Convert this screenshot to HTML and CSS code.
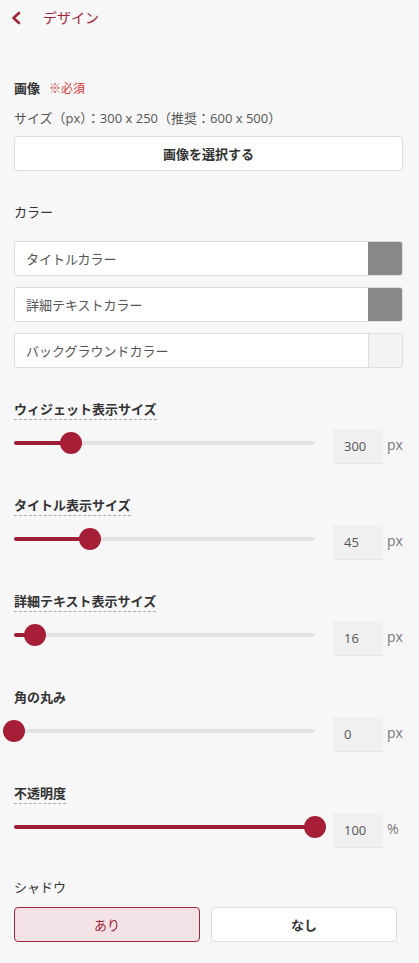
FILE: index.html
```html
<!DOCTYPE html>
<html lang="ja">
<head>
<meta charset="utf-8">
<title>デザイン</title>
<link rel="stylesheet" href="styles.css">
</head>
<body>
<div class="page">
  <header class="header">
    <svg class="back" width="24" height="24" viewBox="0 0 24 24"><polyline points="16,7 10.5,12 16,17" fill="none" stroke="#a0243c" stroke-width="2.6" stroke-linecap="round" stroke-linejoin="round"/></svg>
    <span class="title">デザイン</span>
  </header>

  <section class="image-sec">
    <div class="label bold">画像<span class="req">※必須</span></div>
    <div class="size-note">サイズ（px）：300 x 250（推奨：600 x 500）</div>
    <button class="select-btn">画像を選択する</button>
  </section>

  <section class="color-sec">
    <div class="label">カラー</div>
    <div class="color-row"><span class="color-name">タイトルカラー</span><span class="swatch gray"></span></div>
    <div class="color-row"><span class="color-name">詳細テキストカラー</span><span class="swatch gray"></span></div>
    <div class="color-row"><span class="color-name">バックグラウンドカラー</span><span class="swatch light"></span></div>
  </section>

  <section class="slider-sec">
    <div class="slabel dashed">ウィジェット表示サイズ</div>
    <div class="slider-row">
      <div class="slider"><div class="track"></div><div class="fill" style="width:57px"></div><div class="thumb" style="left:57px"></div></div>
      <div class="valbox">300</div><span class="unit">px</span>
    </div>
  </section>

  <section class="slider-sec">
    <div class="slabel dashed">タイトル表示サイズ</div>
    <div class="slider-row">
      <div class="slider"><div class="track"></div><div class="fill" style="width:76px"></div><div class="thumb" style="left:76px"></div></div>
      <div class="valbox">45</div><span class="unit">px</span>
    </div>
  </section>

  <section class="slider-sec">
    <div class="slabel dashed">詳細テキスト表示サイズ</div>
    <div class="slider-row">
      <div class="slider"><div class="track"></div><div class="fill" style="width:21px"></div><div class="thumb" style="left:21px"></div></div>
      <div class="valbox">16</div><span class="unit">px</span>
    </div>
  </section>

  <section class="slider-sec">
    <div class="slabel">角の丸み</div>
    <div class="slider-row">
      <div class="slider"><div class="track"></div><div class="fill" style="width:0px"></div><div class="thumb" style="left:0px"></div></div>
      <div class="valbox">0</div><span class="unit">px</span>
    </div>
  </section>

  <section class="slider-sec">
    <div class="slabel dashed">不透明度</div>
    <div class="slider-row">
      <div class="slider"><div class="track"></div><div class="fill" style="width:301px"></div><div class="thumb" style="left:301px"></div></div>
      <div class="valbox">100</div><span class="unit pct">%</span>
    </div>
  </section>

  <section class="shadow-sec">
    <div class="label">シャドウ</div>
    <div class="toggle">
      <button class="opt on">あり</button>
      <button class="opt">なし</button>
    </div>
  </section>
</div>
</body>
</html>
```

FILE: styles.css
```css
* { box-sizing: border-box; }
html, body { margin: 0; padding: 0; }
body {
  background: #f7f7f7;
  font-family: "Open Sans", "Noto Sans CJK JP", sans-serif;
  font-size: 13px;
  line-height: 20px;
  color: #333;
}
.page { padding: 0 16px 0 14px; }

.header {
  height: 36px;
  display: flex;
  align-items: center;
  margin: 0 -16px 0 -14px;
  padding-left: 3px;
}
.back { display: block; }
.title {
  margin-left: 16px;
  font-size: 14px;
  color: #a0243c;
}

.label { color: #333; }
.bold { font-weight: 700; }
.req { color: #d93636; font-weight: 400; font-size: 12px; margin-left: 9px; }

.image-sec { margin-top: 42px; }
.size-note { margin-top: 9px; color: #555; }
.select-btn {
  display: block;
  width: 100%;
  height: 35px;
  margin-top: 8px;
  background: #fff;
  border: 1px solid #ddd;
  border-radius: 4px;
  font-family: inherit;
  font-size: 13px;
  font-weight: 700;
  color: #333;
  padding: 0;
}

.color-sec { margin-top: 31px; }
.color-sec .label { margin-bottom: 19px; }
.color-row {
  display: flex;
  height: 35px;
  background: #fff;
  border: 1px solid #ddd;
  border-radius: 3px;
  margin-bottom: 11px;
  overflow: hidden;
}
.color-row:last-child { margin-bottom: 0; }
.color-name {
  flex: 1;
  display: flex;
  align-items: center;
  padding-left: 11px;
  color: #555;
}
.swatch { width: 34px; }
.swatch.gray { background: #888; }
.swatch.light { background: #f3f3f3; border-left: 1px solid #ddd; }

.slider-sec { margin-top: 31px; }
.slabel {
  display: inline-block;
  font-weight: 700;
  color: #333;
  border-bottom: 1px dashed transparent;
}
.slabel.dashed { border-bottom-color: #aaa; }
.slider-row {
  display: flex;
  align-items: flex-start;
  margin-top: 9px;
}
.slider {
  position: relative;
  width: 300px;
  height: 28px;
  flex: none;
}
.track {
  position: absolute;
  left: 0; right: 0;
  top: 12px;
  height: 4px;
  border-radius: 2px;
  background: #e2e2e2;
}
.fill {
  position: absolute;
  left: 0;
  top: 12px;
  height: 4px;
  border-radius: 2px;
  background: #9e1f35;
}
.thumb {
  position: absolute;
  top: 3px;
  width: 22px;
  height: 22px;
  margin-left: -11px;
  border-radius: 50%;
  background: #a71e37;
}
.valbox {
  margin-left: 19px;
  width: 50px;
  height: 35px;
  background: #f0f0f0;
  border-bottom: 1px solid #e6e6e6;
  padding-left: 11px;
  display: flex;
  align-items: center;
  color: #555;
  font-size: 13px;
}
.unit {
  margin-left: 4px;
  line-height: 35px;
  height: 35px;
  color: #777;
  font-size: 14px;
  margin-top: -2px;
}

.shadow-sec { margin-top: 29px; }
.toggle {
  display: flex;
  gap: 11px;
  margin-top: 10px;
}
.opt {
  width: 186px;
  height: 35px;
  border-radius: 4px;
  background: #fff;
  border: 1px solid #ddd;
  font-family: inherit;
  font-size: 13px;
  font-weight: 700;
  color: #333;
  padding: 0;
}
.opt.on {
  background: #f3e3e6;
  border-color: #a0283c;
  color: #a0283c;
  font-weight: 400;
}
```
